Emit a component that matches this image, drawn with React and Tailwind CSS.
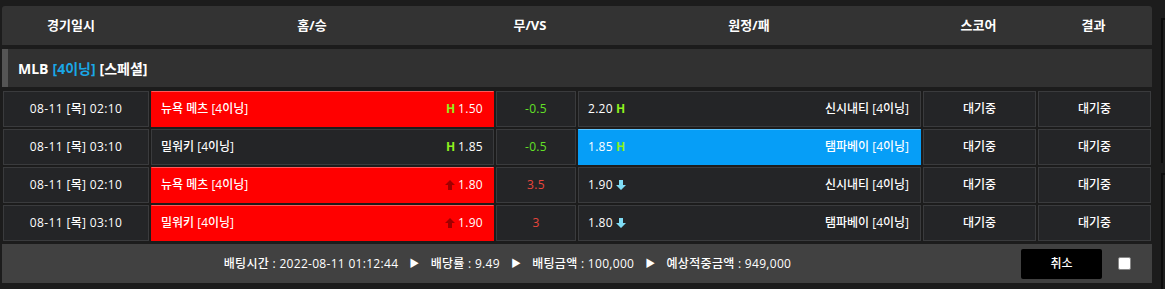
import React from 'react';

const FONT = { fontFamily: '"Open Sans", "Noto Sans CJK KR", sans-serif' };

const ROWS = [
  { time: '08-11 [목] 02:10', home: '뉴욕 메츠 [4이닝]', homeOdds: '1.50', homeMark: 'H', homeSel: true, vs: '-0.5', vsColor: 'text-[#62e026]', awayOdds: '2.20', awayMark: 'H', away: '신시내티 [4이닝]', awaySel: false },
  { time: '08-11 [목] 03:10', home: '밀워키 [4이닝]', homeOdds: '1.85', homeMark: 'H', homeSel: false, vs: '-0.5', vsColor: 'text-[#62e026]', awayOdds: '1.85', awayMark: 'H', away: '탬파베이 [4이닝]', awaySel: true },
  { time: '08-11 [목] 02:10', home: '뉴욕 메츠 [4이닝]', homeOdds: '1.80', homeMark: 'up', homeSel: true, vs: '3.5', vsColor: 'text-[#e8453c]', awayOdds: '1.90', awayMark: 'down', away: '신시내티 [4이닝]', awaySel: false },
  { time: '08-11 [목] 03:10', home: '밀워키 [4이닝]', homeOdds: '1.90', homeMark: 'up', homeSel: true, vs: '3', vsColor: 'text-[#e8453c]', awayOdds: '1.80', awayMark: 'down', away: '탬파베이 [4이닝]', awaySel: false },
];

const ArrowUp = () => (
  <svg viewBox="0 0 10 10" className="w-[10px] h-[10px]">
    <path d="M5 0 L10 5 H7 V10 H3 V5 H0 Z" fill="#a00000" />
  </svg>
);

const ArrowDown = () => (
  <svg viewBox="0 0 10 10" className="w-[10px] h-[10px]">
    <path d="M3 0 H7 V5 H10 L5 10 L0 5 H3 Z" fill="#7fdcf5" />
  </svg>
);

const Mark = ({ type }) => {
  if (type === 'H') return <span className="text-[#8ef01e] font-bold text-[12px] leading-none">H</span>;
  if (type === 'up') return <ArrowUp />;
  return <ArrowDown />;
};

const box = 'h-[36px] border border-[#3a3b3d] bg-[#242527] flex items-center justify-center text-[12px] font-medium';

export default function App() {
  return (
    <div className="w-[1165px] h-[289px] bg-[#1c1c1c] flex overflow-hidden" style={FONT}>
      <div className="w-[1150px] ml-[2px] pt-[6px] flex flex-col shrink-0">
        {/* header */}
        <div className="h-[39px] rounded-t-[3px] bg-[#333333] grid grid-cols-[138px_344px_92px_346px_113px_1fr] items-center text-white text-[13px] font-bold">
          {['경기일시', '홈/승', '무/VS', '원정/패', '스코어', '결과'].map((t) => (
            <div key={t} className="text-center">{t}</div>
          ))}
        </div>

        {/* league */}
        <div className="mt-[4px] h-[38px] bg-[#313131] border-l-[6px] border-[#555555] flex items-center pl-[10px] text-[14px] font-bold text-white">
          MLB <span className="text-[#1aa7e6] ml-[4px]">[4이닝]</span>
          <span className="ml-[4px]">[스페셜]</span>
        </div>

        {/* rows */}
        <div className="mt-[4px] pl-[1px] flex flex-col gap-[2px]">
          {ROWS.map((r, i) => (
            <div key={i} className="grid grid-cols-[146px_343px_80px_343px_113px_113px] gap-[2px]">
              <div className={box + ' text-white tracking-[0.35px]'}>{r.time}</div>
              <div
                className={
                  'h-[36px] border flex items-center justify-between pl-[9px] pr-[10px] text-white text-[12px] font-medium ' +
                  (r.homeSel ? 'bg-[#ff0000] border-[#ff0000] border-t-[#ff5a5a]' : 'bg-[#242527] border-[#3a3b3d]')
                }
              >
                <span>{r.home}</span>
                <span className="flex items-center gap-[3px]">
                  <Mark type={r.homeMark} />
                  <span className="tracking-[0.3px]">{r.homeOdds}</span>
                </span>
              </div>
              <div className={box + ' tracking-[0.3px] ' + r.vsColor}>{r.vs}</div>
              <div
                className={
                  'h-[36px] border flex items-center justify-between pl-[9px] pr-[11px] text-white text-[12px] font-medium ' +
                  (r.awaySel ? 'bg-[#069ef7] border-[#069ef7] border-t-[#5cc4ff]' : 'bg-[#242527] border-[#3a3b3d]')
                }
              >
                <span className="flex items-center gap-[3px]">
                  <span className="tracking-[0.3px]">{r.awayOdds}</span>
                  <Mark type={r.awayMark} />
                </span>
                <span>{r.away}</span>
              </div>
              <div className={box + ' text-white'}>대기중</div>
              <div className={box + ' text-white'}>대기중</div>
            </div>
          ))}
        </div>

        {/* bottom bar */}
        <div className="mt-[3px] h-[39px] bg-[#414141] flex items-center text-white text-[12px] font-medium">
          <div className="flex-1 flex items-center justify-center gap-[11px] pl-[2px] tracking-[0.3px]">
            <span>배팅시간 : 2022-08-11 01:12:44</span>
            <span className="text-[10px]">▶</span>
            <span>배당률 : 9.49</span>
            <span className="text-[10px]">▶</span>
            <span>배팅금액 : 100,000</span>
            <span className="text-[10px]">▶</span>
            <span>예상적중금액 : 949,000</span>
          </div>
          <button className="w-[81px] h-[30px] bg-black rounded-[2px] text-white text-[12px] ml-[10px]">취소</button>
          <div className="w-[50px] flex justify-center pr-[6px]">
            <div className="w-[13px] h-[13px] bg-white border border-[#888] rounded-[2px]" />
          </div>
        </div>
      </div>

      {/* neighbouring panel edge */}
      <div className="flex-1 flex flex-col pl-[9px] pt-[18px] gap-[10px]">
        <div className="h-[145px] border-l-2 border-t-2 border-[#0c0c0c] bg-[#1e1e1e]" />
        <div className="flex-1 border-l-2 border-t-2 border-[#0c0c0c] bg-[#1e1e1e]" />
      </div>
    </div>
  );
}
